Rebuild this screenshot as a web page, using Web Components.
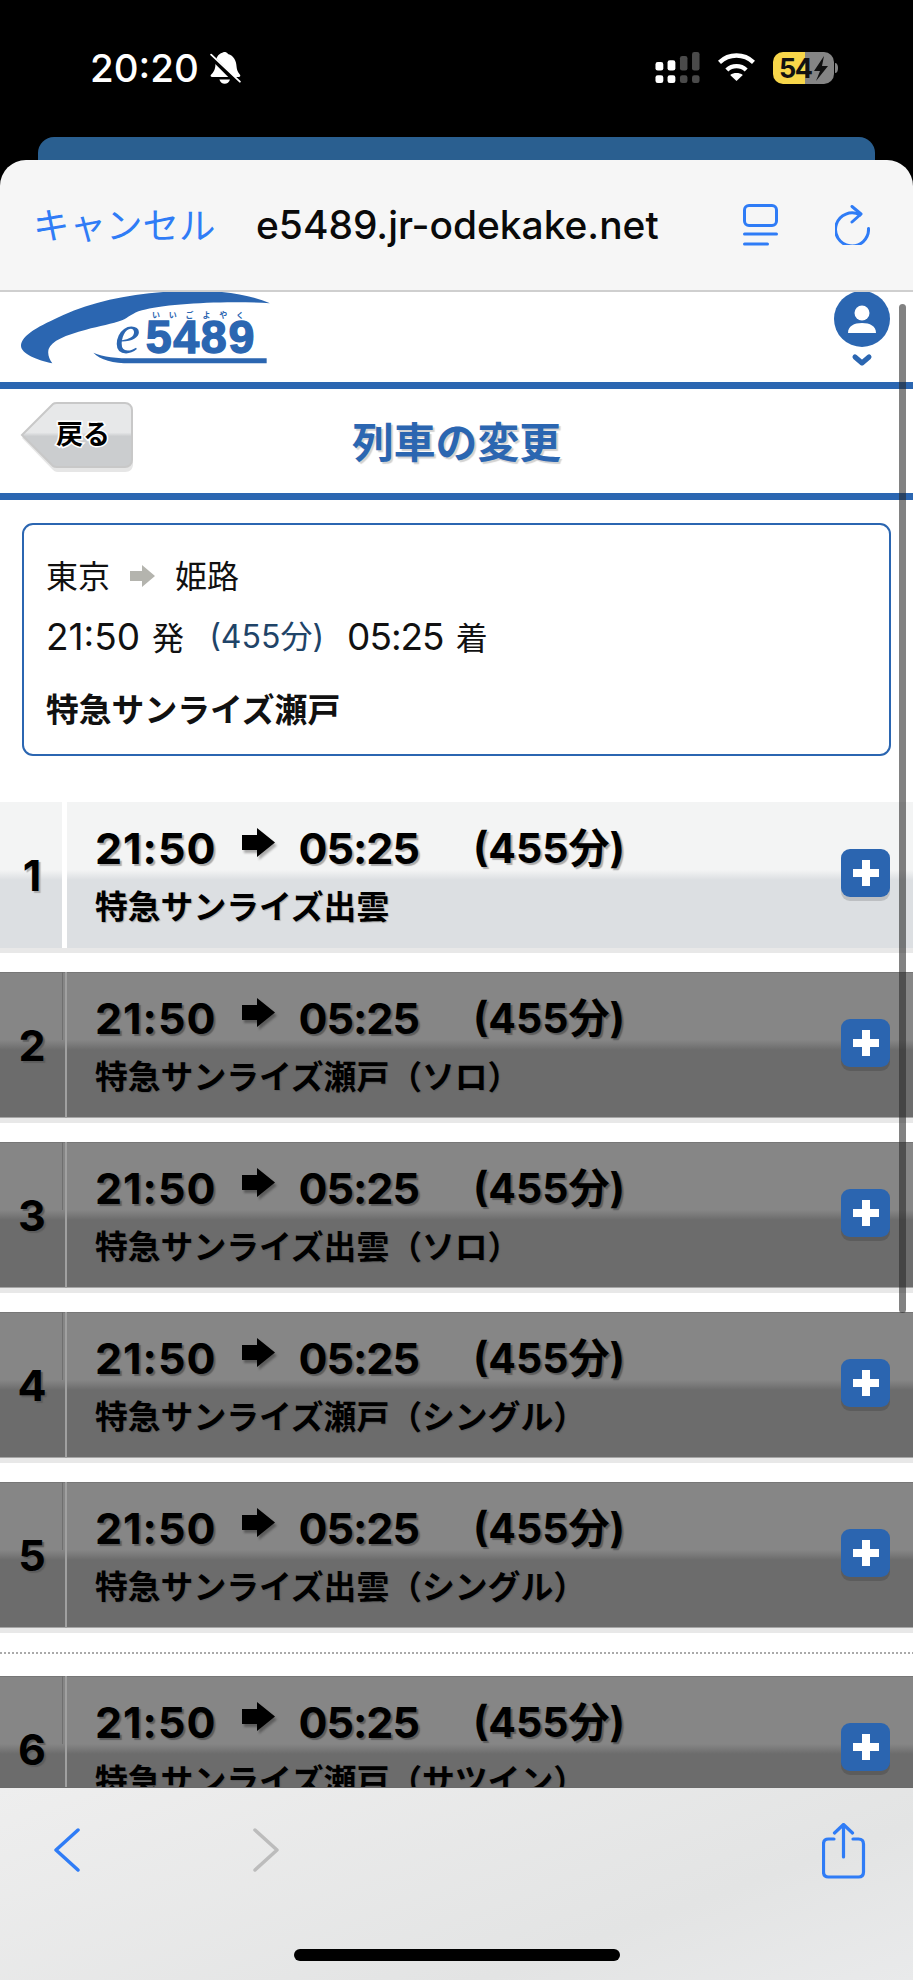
<!DOCTYPE html>
<html lang="ja">
<head>
<meta charset="utf-8">
<title>e5489</title>
<style>
  html, body { margin: 0; background: #000; }
  body { font-family: Inter, "Noto Sans CJK JP", sans-serif; }
</style>
</head>
<body>
<app-frame>
  <status-bar time="20:20" battery="54"></status-bar>
  <safari-head cancel="キャンセル" host-name="e5489.jr-odekake.net"></safari-head>
  <page-view>
    <site-header></site-header>
    <title-bar back="戻る" heading="列車の変更"></title-bar>
    <info-card from="東京" to="姫路" dep="21:50" dur="(455分)" arr="05:25">
      特急サンライズ瀬戸
    </info-card>
    <train-list>
      <train-row num="1" dep="21:50" arr="05:25" dur="(455分)">特急サンライズ出雲</train-row>
      <train-row num="2" dep="21:50" arr="05:25" dur="(455分)" dim>特急サンライズ瀬戸（ソロ）</train-row>
      <train-row num="3" dep="21:50" arr="05:25" dur="(455分)" dim>特急サンライズ出雲（ソロ）</train-row>
      <train-row num="4" dep="21:50" arr="05:25" dur="(455分)" dim>特急サンライズ瀬戸（シングル）</train-row>
      <train-row num="5" dep="21:50" arr="05:25" dur="(455分)" dim>特急サンライズ出雲（シングル）</train-row>
      <dotted-rule></dotted-rule>
      <train-row num="6" dep="21:50" arr="05:25" dur="(455分)" dim>特急サンライズ瀬戸（サツイン）</train-row>
    </train-list>
  </page-view>
  <safari-toolbar></safari-toolbar>
</app-frame>

<script>
class AppFrame extends HTMLElement {
    constructor() {
        super();
        this.attachShadow({ mode: 'open' });
    }
    connectedCallback() {
        this.shadowRoot.innerHTML = `
        <style>
            :host { display: block; position: relative; width: 913px; height: 1980px; overflow: hidden; background: #000; }
            .bar { position: absolute; right: 7px; top: 304px; width: 7px; height: 1009px; border-radius: 4px; background: rgba(40,40,40,.58); }
        </style>
        <slot></slot>
        <div class="bar"></div>
        `;
    }
}

class StatusBar extends HTMLElement {
    constructor() {
        super();
        this.attachShadow({ mode: 'open' });
    }
    connectedCallback() {
        const time = this.getAttribute('time');
        const battery = this.getAttribute('battery');
        this.shadowRoot.innerHTML = `
        <style>
            :host { display: block; height: 160px; box-sizing: border-box; }
            .top { display: flex; justify-content: space-between; height: 137px; box-sizing: border-box; padding: 52px 75px 0 90px; color: #fff; }
            .left, .right { display: flex; align-items: flex-start; }
            .time { font: 500 38.500px/33px Inter, sans-serif; width: 120px; }
            .right { gap: 17px; }
            .tab { height: 23px; margin: 0 38px; background: #2a5f90; border-radius: 16px 16px 0 0; }
            svg { display: block; }
        </style>
        <div class="top">
            <div class="left">
                <div class="time">${time}</div>
                <svg width="31" height="32" viewBox="375 38 93 97">
                    <path fill="#fff" d="M418 38c4 0 9 2 11 6 18 5 25 20 26 38 1 14 7 20 11 26 1 3 0 6-4 6H381c-4 0-6-3-4-6 5-7 14-13 14-34 0-18 8-30 21-34 1-1 3-2 6-2z"/>
                    <path fill="#fff" d="M403 121h32c-2 8-9 13-16 13s-14-5-16-13z"/>
                    <path stroke="#000" stroke-width="14" d="M366 40l96 96"/>
                    <path stroke="#fff" stroke-width="5.5" stroke-linecap="round" d="M378 46l87 82"/>
                </svg>
            </div>
            <div class="right">
                <svg width="45" height="31" viewBox="165 155 135 95">
                    <g fill="#fff">
                        <rect x="165" y="186" width="24" height="26" rx="7"/><rect x="165" y="226" width="24" height="24" rx="7"/>
                        <rect x="202" y="180" width="24" height="32" rx="7"/><rect x="202" y="226" width="24" height="24" rx="7"/>
                    </g>
                    <g fill="#4a4a4a">
                        <rect x="240" y="167" width="23" height="45" rx="7"/><rect x="240" y="226" width="23" height="24" rx="7"/>
                        <rect x="277" y="155" width="23" height="57" rx="7"/><rect x="277" y="226" width="23" height="24" rx="7"/>
                    </g>
                </svg>
                <svg width="39" height="29" viewBox="352 160 116 87">
                    <g fill="none" stroke="#fff" stroke-width="13">
                        <path d="M359 191a74 74 0 0 1 102 0"/>
                        <path d="M381 214a42 42 0 0 1 58 0"/>
                    </g>
                    <path fill="#fff" d="M391 229c11-8 27-8 38 0l-19 18z"/>
                </svg>
                <svg width="65" height="32" viewBox="773 52 65 32">
                    <defs><clipPath id="bt"><rect x="773" y="52" width="61" height="32" rx="10"/></clipPath></defs>
                    <g clip-path="url(#bt)">
                        <rect x="773" y="52" width="32" height="32" fill="#f7d64a"/>
                        <rect x="805" y="52" width="30" height="32" fill="#858585"/>
                    </g>
                    <path fill="#858585" d="M835 63c2 0 3 2 3 5s-1 5-3 5z"/>
                    <text x="779" y="78" font-family="Inter, sans-serif" font-weight="700" font-size="27" fill="#111" textLength="34">${battery}</text>
                    <path fill="#111" d="M824 56l-10 15h6l-4 10 12-15h-6z"/>
                </svg>
            </div>
        </div>
        <div class="tab"></div>
        `;
    }
}

class SafariHead extends HTMLElement {
    constructor() {
        super();
        this.attachShadow({ mode: 'open' });
    }
    connectedCallback() {
        this.shadowRoot.innerHTML = `
        <style>
            :host { display: block; height: 132px; box-sizing: border-box; background: #f6f6f6; border-radius: 26px 26px 0 0; border-bottom: 2px solid #cfcfcf; }
            .row { display: flex; align-items: center; height: 130px; padding-left: 33px; }
            .cancel { font: 400 36.500px/1 "Noto Sans CJK JP", sans-serif; color: #2f7cf6; width: 223px; flex: none; margin-top: -2px; }
            .host { font: 500 38.900px/1 Inter, sans-serif; color: #0a0a0a; width: 487px; flex: none; white-space: nowrap; }
            svg { flex: none; display: block; }
            .reader { margin-right: 57px; }
        </style>
        <div class="row">
            <div class="cancel">${this.getAttribute('cancel')}</div>
            <div class="host">${this.getAttribute('host-name')}</div>
            <svg class="reader" width="35" height="42" viewBox="0 0 35 42" fill="none" stroke="#2f7cf6" stroke-width="3" stroke-linecap="round">
                <rect x="1.5" y="1.5" width="32" height="20" rx="4.5"/>
                <path d="M1.5 30h32M1.5 40h23"/>
            </svg>
            <svg width="35" height="40" viewBox="834 205 35 40" fill="none" stroke="#2f7cf6" stroke-width="3" stroke-linecap="round" stroke-linejoin="round">
                <path d="M859 215a16.5 16.5 0 1 0 8.5 13.500"/>
                <path d="M851 206.500l9 7.500-9 8"/>
            </svg>
        </div>
        `;
    }
}

class PageView extends HTMLElement {
    constructor() {
        super();
        this.attachShadow({ mode: 'open' });
    }
    connectedCallback() {
        this.shadowRoot.innerHTML = `
        <style>
            :host { display: block; height: 1495px; overflow: hidden; background: #fff; }
        </style>
        <slot></slot>
        `;
    }
}

class SiteHeader extends HTMLElement {
    constructor() {
        super();
        this.attachShadow({ mode: 'open' });
    }
    connectedCallback() {
        this.shadowRoot.innerHTML = `
        <style>
            :host { display: flex; justify-content: space-between; height: 90px; border-bottom: 7px solid #2b66b1; }
            svg { display: block; overflow: visible; flex: none; }
            .user { margin: -1px 22px 0 0; }
        </style>
        <svg width="272" height="90" viewBox="0 21 816 270">
            <path fill="#2b66b1" d="M810 55C740 25 650 15 560 18 420 20 290 45 190 90 120 122 63 150 63 183c0 22 50 44 94 52-10-14-15-28-11-43 8-24 50-42 112-58 40-10 80-18 108-28 20-8 30-22 60-30 70-20 250-30 384-21z"/>
            <path fill="#2b66b1" d="M280 203c20 22 60 32 110 32h410v-15H400c-50 0-90-4-120-17z"/>
            <text x="345" y="204" font-family="'Liberation Serif', serif" font-style="italic" font-size="170" fill="#2b66b1">e</text>
            <text x="437" y="204" font-family="'Liberation Sans', sans-serif" font-weight="700" font-size="140" stroke="#2b66b1" stroke-width="4" fill="#2b66b1" textLength="326">5489</text>
            <text x="456" y="100" font-family="'Noto Sans CJK JP', sans-serif" font-weight="700" font-size="24" fill="#2b66b1" textLength="276">いいごよやく</text>
        </svg>
        <svg class="user" width="58" height="76" viewBox="833 291 58 76">
            <circle cx="862" cy="319" r="28" fill="#2b66b1"/>
            <circle cx="862" cy="313" r="7.500" fill="#fff"/>
            <path fill="#fff" d="M848 333c0-7 6-10 14-10s14 3 14 10z"/>
            <path fill="none" stroke="#2b66b1" stroke-width="5" stroke-linecap="round" stroke-linejoin="round" d="M855 357l7 6 7-6"/>
        </svg>
        `;
    }
}

class TitleBar extends HTMLElement {
    constructor() {
        super();
        this.attachShadow({ mode: 'open' });
    }
    connectedCallback() {
        this.shadowRoot.innerHTML = `
        <style>
            :host { display: grid; grid-template-columns: 1fr auto 1fr; align-items: start; height: 104px; border-bottom: 7px solid #2b66b1; }
            svg { display: block; margin: 13px 0 0 20px; }
            h1 { margin: 21px 0 0; font: 700 41.800px/60px "Noto Sans CJK JP", sans-serif; color: #2b66b1; text-shadow: 2px 2px 1px #d2d2d2; }
        </style>
        <svg width="114" height="72" viewBox="20 402 114 72">
            <defs>
                <linearGradient id="bk" x1="0" y1="0" x2="0" y2="1">
                    <stop offset="0" stop-color="#e7e8e9"/><stop offset=".46" stop-color="#e7e8e9"/>
                    <stop offset=".52" stop-color="#cbcdcf"/><stop offset="1" stop-color="#cbcdcf"/>
                </linearGradient>
            </defs>
            <path fill="#e6e6e6" d="M22 438l33-33h70c5 0 8 3 8 8v51c0 5-3 8-8 8H58c-3 0-4-1-6-3z"/>
            <path fill="url(#bk)" stroke="#c8c8c8" stroke-width="2" d="M22 435l31-31c1-1 2-1 4-1h68c4 0 7 3 7 7v50c0 4-3 7-7 7H57c-2 0-3 0-4-1z"/>
            <text x="83" y="444" text-anchor="middle" font-family="'Noto Sans CJK JP', sans-serif" font-weight="700" font-size="27" fill="#000" stroke="#fff" stroke-width="3" paint-order="stroke">${this.getAttribute('back')}</text>
        </svg>
        <h1>${this.getAttribute('heading')}</h1>
        <div></div>
        `;
    }
}

class InfoCard extends HTMLElement {
    constructor() {
        super();
        this.attachShadow({ mode: 'open' });
    }
    connectedCallback() {
        this.shadowRoot.innerHTML = `
        <style>
            :host { display: block; box-sizing: border-box; height: 233px; margin: 23px 22px 0; padding: 19px 22px 0; border: 2px solid #2b66b1; border-radius: 11px; font: 400 32px/61px "Noto Sans CJK JP", sans-serif; color: #111; }
            .line { display: flex; align-items: center; height: 61px; white-space: nowrap; }
            .line + .line { margin-top: 1px; }
            .arrow { margin: 3px 20px 0; display: block; }
            .t { font: 400 37px/61px Inter, sans-serif; margin-right: 12px; }
            .t.arr { letter-spacing: -1px; }
            .dur { font: 400 32px/61px Inter, "Noto Sans CJK JP", sans-serif; color: #1f4468; margin: 0 23px 0 25px; }
            .line.name { font-weight: 700; font-size: 32.800px; margin-top: 10px; }
        </style>
        <div class="line"><span>${this.getAttribute('from')}</span>
            <svg class="arrow" width="25" height="22" viewBox="0 0 25 22"><path fill="#b4b4ae" d="M0 6h12V0l13 11-13 11v-6H0z"/></svg>
            <span>${this.getAttribute('to')}</span></div>
        <div class="line"><span class="t">${this.getAttribute('dep')}</span><span>発</span><span class="dur">${this.getAttribute('dur')}</span><span class="t arr">${this.getAttribute('arr')}</span><span>着</span></div>
        <div class="line name"><slot></slot></div>
        `;
    }
}

class TrainList extends HTMLElement {
    constructor() {
        super();
        this.attachShadow({ mode: 'open' });
    }
    connectedCallback() {
        this.shadowRoot.innerHTML = `
        <style>
            :host { display: flex; flex-direction: column; gap: 19px; margin-top: 46px; }
        </style>
        <slot></slot>
        `;
    }
}

class DottedRule extends HTMLElement {
    constructor() {
        super();
        this.attachShadow({ mode: 'open' });
    }
    connectedCallback() {
        this.shadowRoot.innerHTML = `
        <style>
            :host { display: block; height: 2px; margin-bottom: 3px; background: repeating-linear-gradient(to right, #aaa 0 2px, transparent 2px 4px); }
        </style>
        `;
    }
}

class TrainRow extends HTMLElement {
    constructor() {
        super();
        this.attachShadow({ mode: 'open' });
    }
    connectedCallback() {
        this.shadowRoot.innerHTML = `
        <style>
            :host { display: flex; height: 146px; color: #000; --shade: #ababab; --shade-text: 2px 2px 1px var(--shade);
                background: linear-gradient(to bottom, #f3f4f4 0, #f3f4f4 68px, #dcdfe2 78px, #dcdfe2 100%);
                border-bottom: 5px solid #e8e8e8; }
            :host([dim]) { --shade: #5c5c5c;
                background: linear-gradient(to bottom, #868686 0, #868686 68px, #6c6c6c 78px, #6c6c6c 100%);
                box-shadow: inset 0 1px 0 #777, inset 0 -1px 0 #a6a6a6; }
            .num { width: 64px; margin-right: -2px; flex: none; display: flex; align-items: center; justify-content: center; font: 700 43px/1 Inter, sans-serif; text-shadow: var(--shade-text); }
            .div { width: 5px; flex: none; box-sizing: border-box; background: #fff; }
            :host([dim]) .div { background: linear-gradient(to bottom, #6f6f6f 0, #6f6f6f 68px, transparent 68px) left top / 1px 100% no-repeat; border-right: 2px solid #a0a0a0; }
            .main { flex: 1; padding: 16px 0 0 28px; min-width: 0; }
            .times { display: flex; align-items: center; height: 60px; font: 700 43px/60px Inter, sans-serif; letter-spacing: 1px; text-shadow: var(--shade-text); white-space: nowrap; }
            .times svg { display: block; flex: none; margin: -12px 23px 0 26px; filter: drop-shadow(2px 3px 1px var(--shade)); }
            .arr { letter-spacing: -1px; }
            .dur { margin-left: 54px; font: 700 41px/60px Inter, "Noto Sans CJK JP", sans-serif; letter-spacing: 0; }
            .name { margin-top: -2px; font: 700 32.800px/58px "Noto Sans CJK JP", sans-serif; text-shadow: 1px 1px 1px var(--shade); white-space: nowrap; }
            .plus { flex: none; align-self: flex-start; width: 49px; height: 48px; margin: 47px 23px 0 0; background: #2b65b0; border-radius: 9px; box-shadow: 0 4px 0 rgba(0,0,0,.14); display: flex; align-items: center; justify-content: center; }
            .plus svg { display: block; }
        </style>
        <div class="num">${this.getAttribute('num')}</div>
        <div class="div"></div>
        <div class="main">
            <div class="times">
                <span>${this.getAttribute('dep')}</span>
                <svg width="33" height="29" viewBox="0 0 33 29"><path d="M0 7h15V0l18 14.500L15 29v-7H0z"/></svg>
                <span class="arr">${this.getAttribute('arr')}</span>
                <span class="dur">${this.getAttribute('dur')}</span>
            </div>
            <div class="name"><slot></slot></div>
        </div>
        <div class="plus"><svg width="26" height="26" viewBox="0 0 26 26"><path fill="#fff" d="M9 0h8v9h9v8h-9v9H9v-9H0V9h9z"/></svg></div>
        `;
    }
}

class SafariToolbar extends HTMLElement {
    constructor() {
        super();
        this.attachShadow({ mode: 'open' });
    }
    connectedCallback() {
        this.shadowRoot.innerHTML = `
        <style>
            :host { display: flex; flex-direction: column; height: 193px; box-sizing: border-box; padding-top: 35px; background: linear-gradient(160deg, #eeeeee, #e3e4e4 70%, #e9eaeb); border-top: 1px solid #6a6a6a; }
            .icons { display: flex; align-items: flex-start; height: 56px; padding-left: 54px; }
            .icons svg { display: block; flex: none; }
            .fwd { margin-left: 173px; }
            .share { margin-left: auto; margin-right: 47px; }
            .home { width: 326px; height: 12px; margin: 70px auto 0; border-radius: 6px; background: #000; }
        </style>
        <div class="icons">
            <svg style="margin-top:5px" width="26" height="44" viewBox="0 0 26 44" fill="none" stroke="#2f7cf6" stroke-width="3.500" stroke-linecap="round" stroke-linejoin="round"><path d="M24 2L2 22l22 20"/></svg>
            <svg class="fwd" style="margin-top:5px" width="26" height="44" viewBox="0 0 26 44" fill="none" stroke="#bcbcbc" stroke-width="3.500" stroke-linecap="round" stroke-linejoin="round"><path d="M2 2l22 20L2 42"/></svg>
            <svg class="share" width="44" height="56" viewBox="822 1821 44 56" fill="none" stroke="#2f7cf6" stroke-width="3.200" stroke-linecap="round" stroke-linejoin="round">
                <path d="M834 1837h-5.500c-3.500 0-5 2-5 5v28c0 3 1.500 5 5 5h30c3.500 0 5-2 5-5v-28c0-3-1.500-5-5-5H853"/>
                <path d="M843.500 1855v-32M834.500 1831l9-8.500 9 8.500"/>
            </svg>
        </div>
        <div class="home"></div>
        `;
    }
}

customElements.define('app-frame', AppFrame);
customElements.define('status-bar', StatusBar);
customElements.define('safari-head', SafariHead);
customElements.define('page-view', PageView);
customElements.define('site-header', SiteHeader);
customElements.define('title-bar', TitleBar);
customElements.define('info-card', InfoCard);
customElements.define('train-list', TrainList);
customElements.define('dotted-rule', DottedRule);
customElements.define('train-row', TrainRow);
customElements.define('safari-toolbar', SafariToolbar);
</script>
</body>
</html>
